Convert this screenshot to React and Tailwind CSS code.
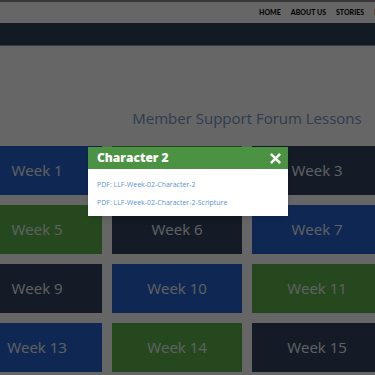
import React from 'react'

const weeks = Array.from({ length: 16 }, (_, i) => i + 1)

const tileColor = (n) => {
  const k = (n - 1) % 3
  if (k === 0) return 'bg-[#2565cf]'
  if (k === 1) return 'bg-[#60b54d]'
  return 'bg-[#32445f]'
}

export default function App() {
  return (
    <div className="relative h-[375px] w-[375px] overflow-hidden bg-white font-['Open_Sans',sans-serif]">
      {/* Top nav */}
      <div className="flex h-[23px] items-center overflow-hidden border-t-2 border-[#8a8a8a] bg-white">
        <nav className="ml-[259px] flex gap-[10px] whitespace-nowrap font-['Lato',sans-serif] text-[7px] font-black uppercase text-[#111]">
          <span>Home</span>
          <span>About Us</span>
          <span>Stories</span>
          <span>Blog</span>
        </nav>
      </div>
      <div className="h-[23px] border-b border-[#909aa4] bg-[#2f425b]" />

      {/* Content */}
      <div className="ml-[-28px] w-[550px]">
        <h1 className="mt-[61px] text-center text-[15px] leading-[22px] text-[#7599c4]">
          Member Support Forum Lessons
        </h1>
        <div className="mt-[17px] grid grid-cols-[repeat(4,130px)] gap-x-[10px] gap-y-[10px]">
          {weeks.map((n) => (
            <div
              key={n}
              className={`flex h-[49px] items-center justify-center text-[15px] text-[#eef1f5] ${tileColor(n)}`}
            >
              Week {n}
            </div>
          ))}
        </div>
      </div>

      {/* Overlay */}
      <div className="absolute inset-0 bg-black/60" />

      {/* Modal */}
      <div className="absolute left-[88px] top-[147px] w-[200px] bg-white shadow-md">
        <div className="flex h-[22px] items-center justify-between bg-[#4b9343] pl-[9px] pr-[7px]">
          <span className="text-[12px] font-extrabold text-white">Character 2</span>
          <svg width="11" height="11" viewBox="0 0 12 12" className="text-white">
            <path d="M2 2 L10 10 M10 2 L2 10" stroke="currentColor" strokeWidth="2.8" strokeLinecap="square" />
          </svg>
        </div>
        <div className="flex flex-col gap-[7px] px-[9px] pb-[8px] pt-[10px] text-[7px] leading-[11px] text-[#5d93cf]">
          <a>PDF: LLF-Week-02-Character-2</a>
          <a>PDF: LLF-Week-02-Character-2-Scripture</a>
        </div>
      </div>
    </div>
  )
}
